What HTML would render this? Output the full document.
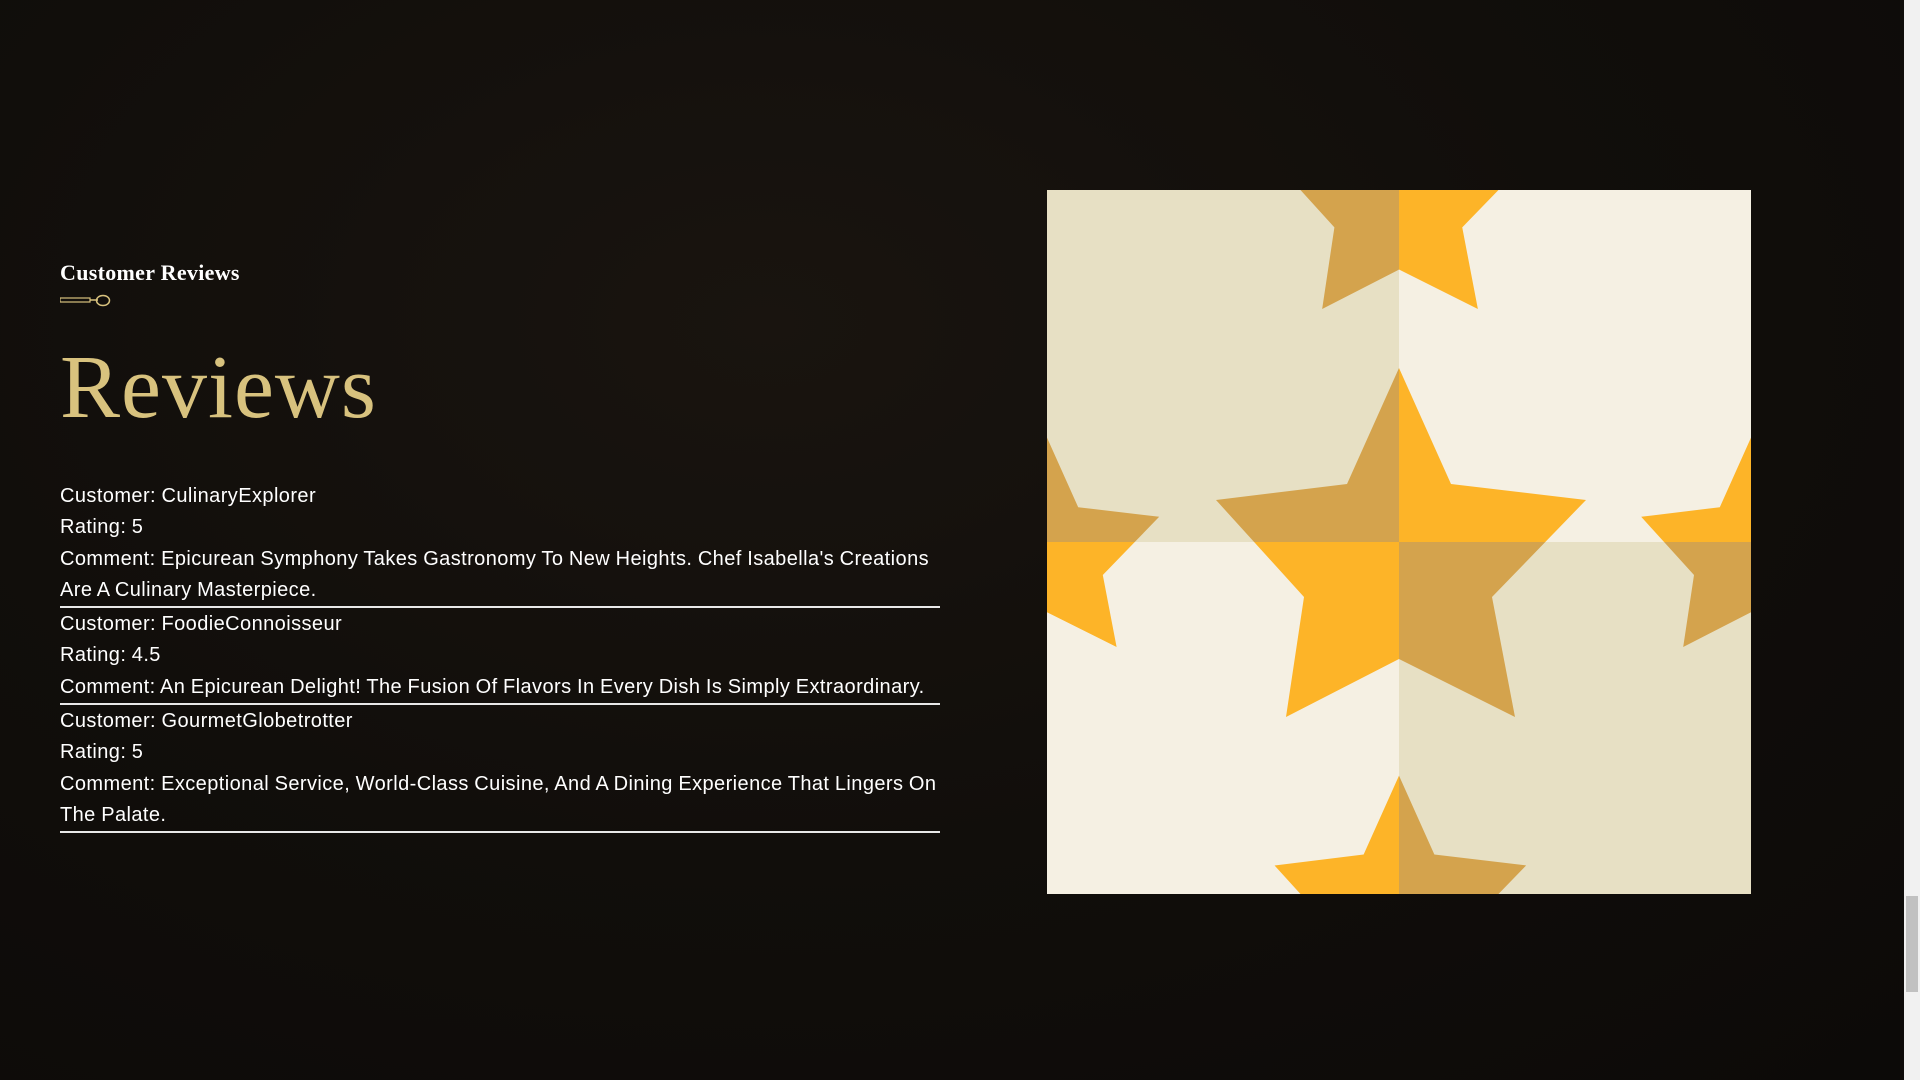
<!DOCTYPE html>
<html><head><meta charset="utf-8">
<style>
html,body{margin:0;padding:0;width:1920px;height:1080px;overflow:hidden;background:#100d0b;}
body{position:relative;background:radial-gradient(ellipse at 40% 30%,#19140f 0%,#110e0b 50%,#0c0a08 100%);font-family:"Liberation Sans","DejaVu Sans",sans-serif;}
.sub{position:absolute;left:60px;top:260px;font-family:"Liberation Serif",serif;font-size:22px;font-weight:bold;color:#fff;letter-spacing:.3px;}
.div{position:absolute;left:60px;top:294px;}
.title{position:absolute;left:60px;top:333px;font-family:"Liberation Serif",serif;font-size:90px;color:#d8c27e;line-height:110px;letter-spacing:1px;}
.list{position:absolute;left:60px;top:481px;width:880px;color:#fff;font-size:20px;line-height:31.3px;letter-spacing:.42px;word-spacing:-0.5px;}
.rev{border-bottom:2px solid #e8e8e8;margin-bottom:1px;}
.img{position:absolute;left:1047px;top:190px;width:704px;height:704px;}
.sb{position:absolute;right:0;top:0;width:16px;height:1080px;background:#f1f1f1;}
.th{position:absolute;right:2px;top:896px;width:12px;height:96px;background:#c1c1c1;}
</style></head><body>
<div class="sub">Customer Reviews</div>
<svg class="div" width="60" height="14"><rect x="0" y="4" width="30" height="4" fill="none" stroke="#d8c27e" stroke-width="1.2"/><line x1="30" y1="6" x2="38" y2="6" stroke="#d8c27e" stroke-width="1.5"/><ellipse cx="43" cy="6.5" rx="6.5" ry="5" fill="none" stroke="#d8c27e" stroke-width="1.5"/></svg>
<div class="title">Reviews</div>
<div class="list">
<div class="rev">Customer: CulinaryExplorer<br>Rating: 5<br>Comment: Epicurean Symphony Takes Gastronomy To New Heights. Chef Isabella's Creations Are A Culinary Masterpiece.</div>
<div class="rev">Customer: FoodieConnoisseur<br>Rating: 4.5<br>Comment: An Epicurean Delight! The Fusion Of Flavors In Every Dish Is Simply Extraordinary.</div>
<div class="rev">Customer: GourmetGlobetrotter<br>Rating: 5<br>Comment: Exceptional Service, World-Class Cuisine, And A Dining Experience That Lingers On The Palate.</div>
</div>
<svg class="img" viewBox="0 0 704 704">
<defs>
<clipPath id="b"><rect x="0" y="0" width="352" height="352"/><rect x="352" y="352" width="352" height="352"/></clipPath>
<clipPath id="l"><rect x="352" y="0" width="352" height="352"/><rect x="0" y="352" width="352" height="352"/></clipPath>
<polygon id="s" points="0,-174 52,-58 187,-42 93,55 116,175 0,117 -113,175 -95,55 -183,-42 -52,-58"/>
<g id="all">
<use href="#s" transform="translate(352,352)"/>
<use href="#s" transform="translate(352,0) scale(0.68)"/>
<use href="#s" transform="translate(352,704) scale(0.68)"/>
<use href="#s" transform="translate(0,352) scale(0.6)"/>
<use href="#s" transform="translate(704,352) scale(0.6)"/>
</g>
</defs>
<rect width="704" height="704" fill="#f5f0e3"/>
<rect width="352" height="352" fill="#e7e0c4"/>
<rect x="352" y="352" width="352" height="352" fill="#e7e0c4"/>
<g clip-path="url(#b)" fill="#d4a34d"><use href="#all"/></g>
<g clip-path="url(#l)" fill="#fdb428"><use href="#all"/></g>
</svg>
<div class="sb"><div class="th"></div></div>
</body></html>
